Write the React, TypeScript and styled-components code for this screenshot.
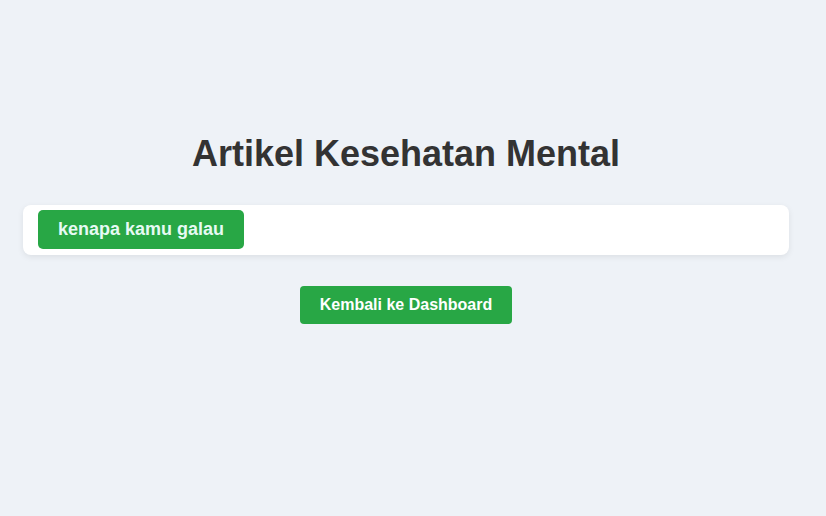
import React from "react";
import styled, { createGlobalStyle } from "styled-components";

const Global = createGlobalStyle`
  html, body { margin: 0; padding: 0; background: #eef2f7; }
  body { font-family: "Liberation Sans", Arial, sans-serif; }
`;

const Page = styled.div`
  min-height: 516px;
  box-sizing: border-box;
  padding: 133px 37px 0 23px;
  display: flex;
  flex-direction: column;
  align-items: center;
`;

const Title = styled.h1`
  margin: 0 0 30px;
  font-size: 36px;
  font-weight: 700;
  color: #333;
  line-height: 42px;
`;

const List = styled.div`
  width: 100%;
  display: flex;
  flex-direction: column;
  gap: 10px;
`;

const Card = styled.div`
  background: #fff;
  border-radius: 8px;
  box-shadow: 0 2px 6px rgba(0, 0, 0, 0.08);
  padding: 5px 15px 6px;
  display: flex;
`;

const ArticleButton = styled.button`
  background: #28a745;
  color: #e6faf4;
  border: none;
  border-radius: 5px;
  height: 39px;
  padding: 0 20px;
  font-family: inherit;
  font-size: 18px;
  font-weight: 700;
  cursor: pointer;
`;

const BackButton = styled.button`
  margin-top: 31px;
  background: #28a745;
  color: #fff;
  border: none;
  border-radius: 4px;
  height: 38px;
  padding: 0 20px;
  font-family: inherit;
  font-size: 16px;
  font-weight: 700;
  cursor: pointer;
`;

export default function App() {
  return (
    <>
      <Global />
      <Page>
        <Title>Artikel Kesehatan Mental</Title>
        <List>
          <Card>
            <ArticleButton>kenapa kamu galau</ArticleButton>
          </Card>
        </List>
        <BackButton>Kembali ke Dashboard</BackButton>
      </Page>
    </>
  );
}
